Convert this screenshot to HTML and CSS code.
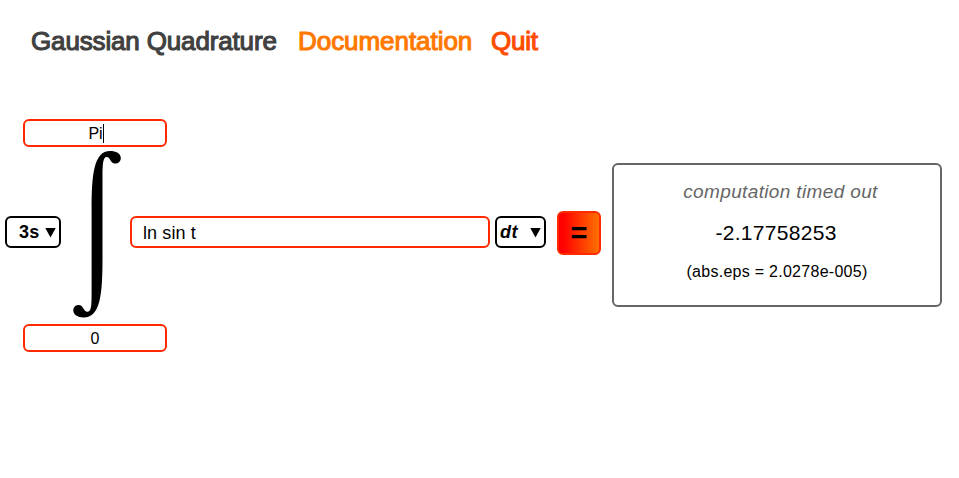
FILE: index.html
```html
<!DOCTYPE html>
<html lang="en">
<head>
<meta charset="utf-8">
<title>Gaussian Quadrature</title>
<link rel="stylesheet" href="styles.css">
</head>
<body>
<header class="header">
  <span class="brand">Gaussian Quadrature</span>
  <a class="docs">Documentation</a>
  <a class="quit">Quit</a>
</header>
<main class="calculator">
  <div class="field limit upper"><span class="value">Pi</span><span class="caret"></span></div>
  <div class="select timeout"><span>3s</span><svg class="arrow" viewBox="0 0 11 10"><path d="M.3 0H10.700L5.500 9.500Z"/></svg></div>
  <svg class="integral" viewBox="0 0 48 168">
    <path d="M18.600 60C18.600 24 21 1 37 1C43 1 47.800 3.500 47.800 8C47.800 11.200 45.500 13.600 42 13.600C37.300 13.600 37.300 7 33.800 7C29.900 7 29.500 14 29.500 28V108C29.500 146 27 167.500 10.500 167.500C4.500 167.500 .3 164.500 .3 160.500C.3 157.200 2.700 155 5.700 155C10.500 155 10.700 161.800 14.300 161.800C18.300 161.800 18.600 156 18.600 142Z"/>
  </svg>
  <div class="expression">
    <div class="field function">ln sin t</div>
    <div class="select variable"><span>dt</span><svg class="arrow" viewBox="0 0 11 10"><path d="M.3 0H10.700L5.500 9.500Z"/></svg></div>
    <div class="equals">=</div>
    <section class="result">
      <div class="status">computation timed out</div>
      <div class="answer">-2.17758253</div>
      <div class="error">(abs.eps = 2.0278e-005)</div>
    </section>
  </div>
  <div class="field limit lower">0</div>
</main>
</body>
</html>
```
FILE: styles.css
```css
* { box-sizing: border-box; }
body {
  margin: 0;
  height: 478px;
  overflow: hidden;
  background: #fff;
  color: #000;
  font-family: "Liberation Sans", Arial, sans-serif;
}
.header {
  display: flex;
  height: 119px;
  padding: 26px 0 0 31px;
  font-size: 26px;
  line-height: 31px;
  white-space: nowrap;
}
.brand { width: 267px; color: #404040; letter-spacing: -.15px; -webkit-text-stroke: 1.1px #404040; }
.docs { width: 193px; color: #ff7800; letter-spacing: -.05px; -webkit-text-stroke: 1.1px #ff7800; }
.quit { color: #ff4c00; letter-spacing: -.25px; -webkit-text-stroke: 1.1px #ff4c00; }
.calculator {
  display: grid;
  grid-template-columns: 18px 38px 69px 37px 775px;
  grid-template-rows: 28px 177px 28px;
  margin-left: 5px;
}
.field { border: 2px solid #ff2a00; border-radius: 6px; background: #fff; }
.limit {
  grid-column: 2 / 5;
  display: flex;
  align-items: center;
  justify-content: center;
  padding: 2px 0 0;
  font-size: 16px;
}
.upper { grid-row: 1; padding: 1px 0 0 2px; }
.lower { grid-row: 3; }
.caret { width: 1px; height: 19px; background: #000; }
.select {
  display: flex;
  align-items: center;
  height: 32px;
  border: 2px solid #000;
  border-radius: 6px;
  font-size: 18px;
  font-weight: bold;
}
.arrow { width: 11px; height: 10px; margin-top: 2px; }
.timeout { grid-area: 2 / 1 / 3 / 3; margin-top: 69px; padding-left: 12px; gap: 6px; letter-spacing: .2px; }
.integral { grid-area: 2 / 3; width: 48px; height: 168px; margin: 3px 0 0 12px; }
.expression { grid-area: 2 / 4 / 3 / 6; display: flex; align-items: flex-start; }
.function {
  width: 360px;
  height: 32px;
  margin-top: 69px;
  padding-left: 11px;
  font-size: 18px;
  line-height: 30px;
  letter-spacing: .1px;
}
.variable {
  width: 51px;
  margin: 69px 11px 0 5px;
  padding: 0 3px;
  justify-content: space-between;
  font-style: italic;
  letter-spacing: .4px;
}
.equals {
  width: 44px;
  height: 44px;
  margin: 64px 11px 0 0;
  border: 2px solid #ff2a00;
  border-radius: 6px;
  background: linear-gradient(90deg, #f00 10%, #ff7000);
  font-size: 29px;
  font-weight: bold;
  line-height: 41px;
  text-align: center;
}
.result {
  width: 330px;
  height: 144px;
  margin-top: 16px;
  padding-top: 15px;
  border: 2px solid #666;
  border-radius: 6px;
  text-align: center;
}
.status { height: 40px; color: #666; font-size: 19px; font-style: italic; line-height: 23px; letter-spacing: .36px; padding-left: 7px; }
.answer { height: 43px; padding-right: 2px; font-size: 21px; line-height: 25px; letter-spacing: .3px; }
.error { font-size: 16px; line-height: 18px; letter-spacing: .27px; }
```
